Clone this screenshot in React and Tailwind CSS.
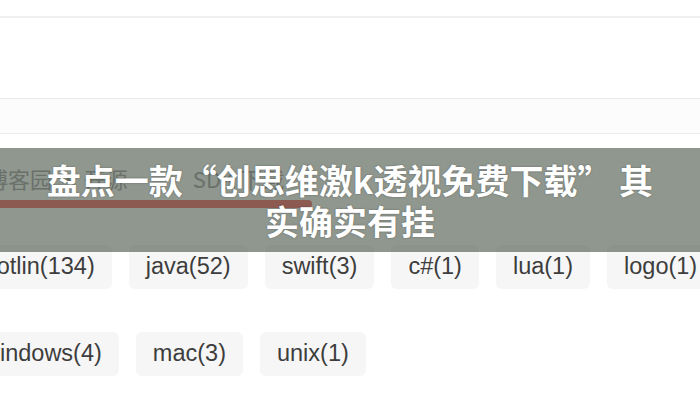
const rowOne = ['kotlin(134)', 'java(52)', 'swift(3)', 'c#(1)', 'lua(1)', 'logo(1)', 'go(1)'];
const rowTwo = ['windows(4)', 'mac(3)', 'unix(1)'];

function Tag({ label }) {
  return (
    <div className="h-[44px] shrink-0 flex items-center px-[17px] rounded-md bg-[#f6f6f6] text-[#3d3d3d] text-[23.5px] whitespace-nowrap">
      {label}
    </div>
  );
}

export default function App() {
  return (
    <div
      className="relative w-[700px] h-[400px] overflow-hidden bg-white"
      style={{ fontFamily: '"Liberation Sans", Arial, "Noto Sans CJK SC", sans-serif' }}
    >
      {/* page behind the caption */}
      <div className="h-[16px]" />
      <div className="h-[2px] bg-[#efefef]" />
      <div className="h-[80px]" />
      <div className="h-px bg-[#eaeaea]" />
      <div className="h-[34px] bg-[#fcfcfc]" />
      <div className="h-px bg-[#ececec]" />

      <div className="h-[111px] pt-[31px]">
        <div
          className="ml-[-14px] text-[22px] leading-[26px] text-[#b4b0b4] whitespace-nowrap"
          style={{ fontFamily: '"Noto Sans CJK SC", "Liberation Sans", sans-serif' }}
        >
          博客园 · 开源 <span className="ml-[60px]">SDK</span> 下载
        </div>
        <div className="mt-[9px] h-[8px] w-[312px] rounded-r-full bg-[#fb8585]" />
      </div>

      <div className="flex gap-[17px] ml-[-32px]">
        {rowOne.map((t) => (
          <Tag key={t} label={t} />
        ))}
      </div>
      <div className="flex gap-[17px] ml-[-34px] mt-[43px]">
        {rowTwo.map((t) => (
          <Tag key={t} label={t} />
        ))}
      </div>

      {/* caption band over the picture */}
      <div className="absolute inset-x-0 top-[148px] h-[104px] bg-[rgba(31,47,31,0.5)] flex items-center justify-center">
        <h1
          className="max-w-[620px] text-center text-white font-bold text-[34px] leading-[41px] [text-shadow:0_0_2px_rgba(0,0,0,0.35)]"
          style={{ fontFamily: '"Noto Sans CJK SC", "Noto Sans", sans-serif' }}
        >
          盘点一款“创思维激k透视免费下载” 其实确实有挂
        </h1>
      </div>
    </div>
  );
}
